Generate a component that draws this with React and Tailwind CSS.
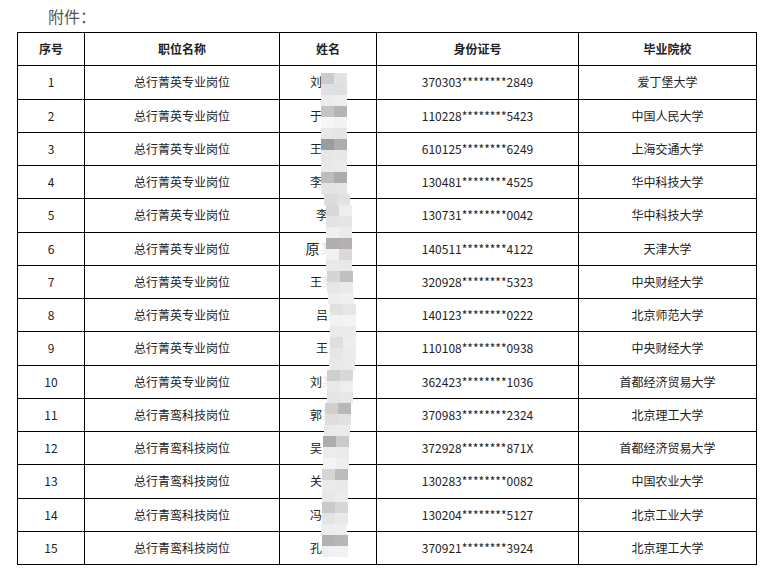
import React from 'react';

const rows = [
  ['1', '总行菁英专业岗位', '刘某某', '370303********2849', '爱丁堡大学'],
  ['2', '总行菁英专业岗位', '于某某', '110228********5423', '中国人民大学'],
  ['3', '总行菁英专业岗位', '王某某', '610125********6249', '上海交通大学'],
  ['4', '总行菁英专业岗位', '李某某', '130481********4525', '华中科技大学'],
  ['5', '总行菁英专业岗位', '李某', '130731********0042', '华中科技大学'],
  ['6', '总行菁英专业岗位', '原某某', '140511********4122', '天津大学', true],
  ['7', '总行菁英专业岗位', '王某某', '320928********5323', '中央财经大学'],
  ['8', '总行菁英专业岗位', '吕某', '140123********0222', '北京师范大学'],
  ['9', '总行菁英专业岗位', '王某', '110108********0938', '中央财经大学'],
  ['10', '总行菁英专业岗位', '刘某某', '362423********1036', '首都经济贸易大学'],
  ['11', '总行青鸾科技岗位', '郭某某', '370983********2324', '北京理工大学'],
  ['12', '总行青鸾科技岗位', '吴某某', '372928********871X', '首都经济贸易大学'],
  ['13', '总行青鸾科技岗位', '关某某', '130283********0082', '中国农业大学'],
  ['14', '总行青鸾科技岗位', '冯某某', '130204********5127', '北京工业大学'],
  ['15', '总行青鸾科技岗位', '孔某某', '370921********3924', '北京理工大学'],
];

// mosaic blur over the name column: [left, right, offset] per 11px cell
const mosaic = [
  ['#c9cbce', '#e2e2e4', 0], ['#e0e0e2', '#dedfe1', 0], ['#ececec', '#eeeeee', 0],
  ['#c4c4c6', '#b4b5b8', 0], ['#f6f6f6', '#f2f2f3', 0], ['#e8e8e9', '#e6e6e7', 0],
  ['#9c9c9e', '#acadb0', 0], ['#e6e6e6', '#e8e8e8', 0], ['#e9e9ea', '#ebebeb', 0],
  ['#bdbdbd', '#abacae', 0], ['#e4e4e4', '#e5e5e5', 0], ['#dcdcdd', '#e1e2e3', 3],
  ['#d7d9db', '#eceeef', 5], ['#e3e3e4', '#e6e6e7', 5], ['#f1f1f1', '#ebebec', 5],
  ['#b0aeae', '#b4b0b0', 5], ['#f1f1f1', '#dcd8da', 5], ['#e9e9e9', '#e8e8e8', 5],
  ['#d5d5d5', '#c0c0c1', 6], ['#e6e6e6', '#eaeaea', 6], ['#ededed', '#efefef', 7],
  ['#e1e1e1', '#e6e7e8', 9], ['#f2f2f2', '#f4f4f5', 9], ['#ebebeb', '#eaeaea', 9],
  ['#dddfe1', '#eceef0', 9], ['#e6e6e7', '#e8ecef', 9], ['#e9e9e9', '#eaeaea', 8],
  ['#cecece', '#d6d8d9', 6], ['#e9e9e9', '#eeeef0', 6], ['#e6e6e6', '#e8e8e8', 6],
  ['#d2cfd0', '#b7b8ba', 4], ['#dddddd', '#e1e1e1', 4], ['#eaeaea', '#ececec', 3],
  ['#abadaf', '#c9cacc', 2], ['#ececec', '#eaeaea', 2], ['#f4f4f4', '#eeeeee', 2],
  ['#d8d5d6', '#bbbcbe', 1], ['#ebebeb', '#e9e9e9', 1], ['#e8e8e8', '#ececec', 1],
  ['#c9c9cb', '#d4d6d9', 1], ['#e3e3e3', '#e9e9eb', 1], ['#ededed', '#eeeeee', 0],
  ['#b1b1b2', '#b7b7b9', 1], ['#f0f0f0', '#f2f2f2', 1],
];

export default function App() {
  return (
    <div className="relative w-[765px] h-[574px] bg-white overflow-hidden" style={{ fontFamily: '"Microsoft YaHei", "Noto Sans CJK SC", "Noto Sans", sans-serif' }}>
      <div className="h-[32px] pl-[48px] pt-[4px] text-[16px] leading-[24px] text-[#555]">附件：</div>
      <table className="ml-[17px] w-[739px] table-fixed border-collapse text-[12px] text-[#222]">
        <colgroup>
          <col className="w-[67px]" />
          <col className="w-[195px]" />
          <col className="w-[97px]" />
          <col className="w-[202px]" />
          <col className="w-[178px]" />
        </colgroup>
        <thead>
          <tr className="h-[33.25px] font-bold">
            {['序号', '职位名称', '姓名', '身份证号', '毕业院校'].map((h) => (
              <th key={h} className="border border-black p-0 text-center font-bold">{h}</th>
            ))}
          </tr>
        </thead>
        <tbody>
          {rows.map((r) => (
            <tr key={r[0]} className="h-[33.25px]">
              <td className="border border-black p-0 text-center">{r[0]}</td>
              <td className="border border-black p-0 text-center">{r[1]}</td>
              <td className="border border-black p-0 text-center">
                <span className={r[5] ? 'text-[14px] tracking-[1px]' : ''}>
                  {r[2].slice(0, 1)}
                  <span className="text-[#e4e4e4]">{r[2].slice(1)}</span>
                </span>
              </td>
              <td className="border border-black p-0 text-center">{r[3]}</td>
              <td className="border border-black p-0 text-center">{r[4]}</td>
            </tr>
          ))}
        </tbody>
      </table>

      {/* mosaic over the name column */}
      <div className="absolute left-[321px] top-[73px] w-[40px] flex flex-col">
        {mosaic.map((c, i) => (
          <div key={i} className="flex h-[11px]" style={{ marginLeft: c[2] }}>
            <div className="w-[13px]" style={{ background: c[0] }} />
            <div className="w-[13px]" style={{ background: c[1] }} />
          </div>
        ))}
      </div>
    </div>
  );
}
